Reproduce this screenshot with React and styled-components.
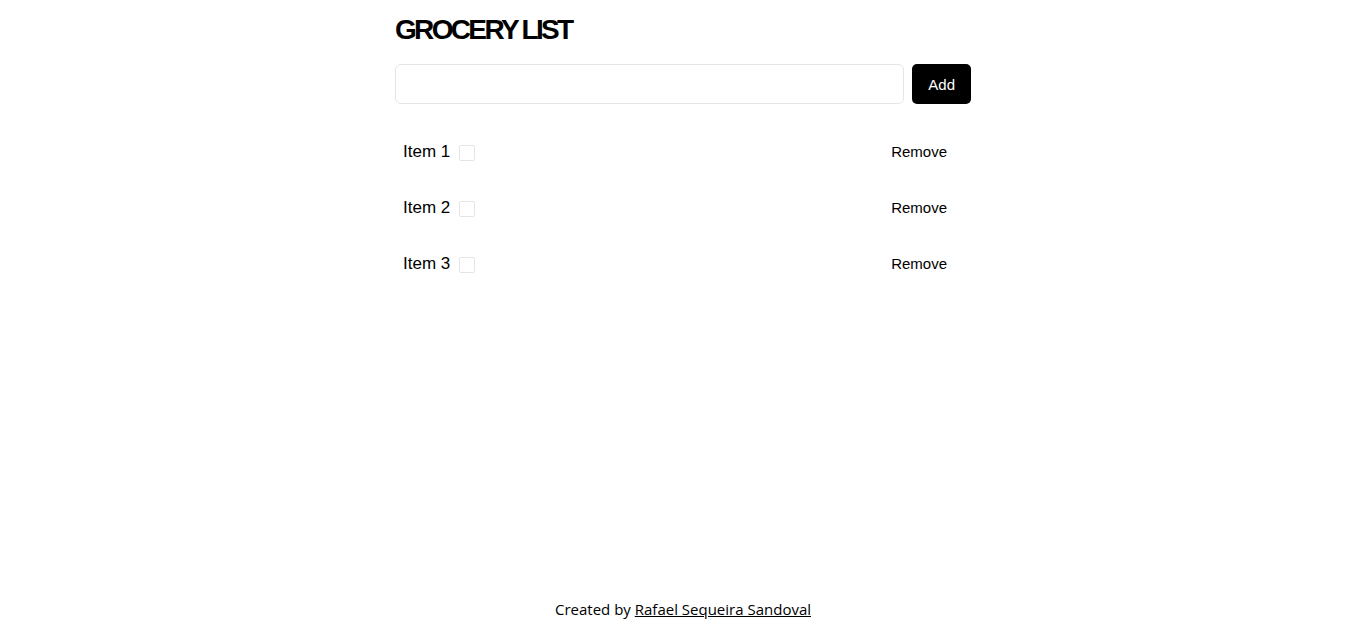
import React, { useState } from "react";
import styled, { createGlobalStyle } from "styled-components";

const Global = createGlobalStyle`
  html, body { margin: 0; padding: 0; background: #fff; }
  body { font-family: "Liberation Sans", Arial, sans-serif; color: #000; }
`;

const Page = styled.div`
  min-height: 100vh;
  display: flex;
  flex-direction: column;
  align-items: center;
`;

const Main = styled.main`
  width: 576px;
  padding-top: 14px;
  flex: 1;
`;

const Title = styled.h1`
  margin: 0;
  font-size: 28px;
  line-height: 32px;
  font-weight: 700;
  letter-spacing: -0.095em;
`;

const Form = styled.form`
  display: flex;
  gap: 8px;
  margin-top: 18px;
`;

const Input = styled.input`
  flex: 1;
  height: 40px;
  box-sizing: border-box;
  border: 1px solid #e5e5e5;
  border-radius: 6px;
  padding: 0 12px;
  font: 16px "Liberation Sans", Arial, sans-serif;
  outline: none;
`;

const AddButton = styled.button`
  height: 40px;
  padding: 0 16px;
  border: none;
  border-radius: 5px;
  background: #000;
  color: #fff;
  font: 15px "Liberation Sans", Arial, sans-serif;
  cursor: pointer;
`;

const List = styled.ul`
  list-style: none;
  margin: 28px 0 0;
  padding: 0;
  display: flex;
  flex-direction: column;
  gap: 16px;
`;

const Row = styled.li`
  display: flex;
  align-items: center;
  height: 40px;
  padding: 0 8px;
`;

const Label = styled.span`
  font-size: 17px;
`;

const Check = styled.input`
  appearance: none;
  box-sizing: border-box;
  width: 16px;
  height: 16px;
  margin: 1px 0 0 9px;
  border: 1px solid #e5e5e5;
  border-radius: 2px;
  background: #fff;
  &:checked { background: #000; border-color: #000; }
`;

const RemoveButton = styled.button`
  margin-left: auto;
  background: none;
  border: none;
  padding: 8px 16px;
  font: 15px/24px "Liberation Sans", Arial, sans-serif;
  color: #000;
  cursor: pointer;
`;

const Footer = styled.footer`
  padding-bottom: 22px;
  font-family: "Open Sans", "Noto Sans", sans-serif;
  font-size: 15px;
  line-height: 24px;
  color: #000;
  a { color: #000; text-decoration: underline; }
`;

export default function App() {
  const [items, setItems] = useState([
    { id: 1, name: "Item 1", done: false },
    { id: 2, name: "Item 2", done: false },
    { id: 3, name: "Item 3", done: false },
  ]);
  const [text, setText] = useState("");
  return (
    <Page>
      <Global />
      <Main>
        <Title>GROCERY LIST</Title>
        <Form
          onSubmit={(e) => {
            e.preventDefault();
            if (!text.trim()) return;
            setItems([...items, { id: Date.now(), name: text, done: false }]);
            setText("");
          }}
        >
          <Input value={text} onChange={(e) => setText(e.target.value)} />
          <AddButton type="submit">Add</AddButton>
        </Form>
        <List>
          {items.map((it) => (
            <Row key={it.id}>
              <Label>{it.name}</Label>
              <Check
                type="checkbox"
                checked={it.done}
                onChange={() =>
                  setItems(items.map((x) => (x.id === it.id ? { ...x, done: !x.done } : x)))
                }
              />
              <RemoveButton onClick={() => setItems(items.filter((x) => x.id !== it.id))}>
                Remove
              </RemoveButton>
            </Row>
          ))}
        </List>
      </Main>
      <Footer>
        Created by <a href="#">Rafael Sequeira Sandoval</a>
      </Footer>
    </Page>
  );
}
